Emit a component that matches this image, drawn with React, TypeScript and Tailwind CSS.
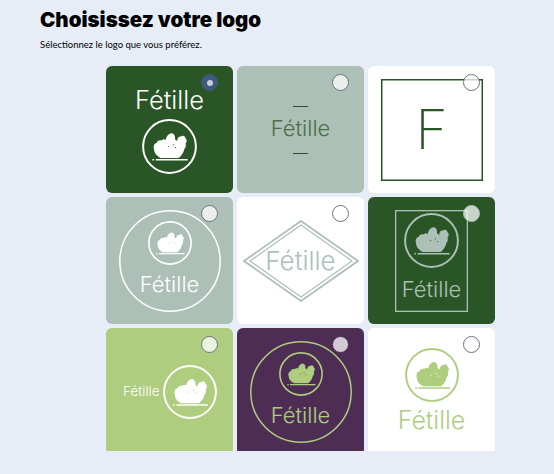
import type { ReactNode } from "react";

function Mark({ className, speck }: { className: string; speck: string }) {
  return (
    <svg viewBox="0 0 100 100" className={className} fill="none">
      <circle cx="50" cy="50" r="48" stroke="currentColor" strokeWidth="3.6" />
      <path
        fill="currentColor"
        d="M34 71C27 67 22 62 22 55C20 50 22 44 27 43C28 39 33 38 36 39C38 36 41 36 43 38C44 32 48 27 53 26C58 26 61 31 60 37L64 40C64 35 67 31 71 32C73 29 79 30 79 35C83 38 81 43 79 45C81 49 79 53 77 54C76 61 71 68 66 71Z"
      />
      <path d="M19 74H22M25 74H83" stroke="currentColor" strokeWidth="2.6" />
      <circle cx="48" cy="50" r="1.1" fill={speck} />
      <circle cx="57" cy="47" r="1.1" fill={speck} />
      <circle cx="61" cy="52" r="1.1" fill={speck} />
    </svg>
  );
}

function Ring({ color }: { color: string }) {
  return (
    <svg viewBox="0 0 102 102" className="absolute inset-0 w-full h-full" fill="none">
      <circle cx="51" cy="51" r="50.2" stroke={color} strokeWidth="1.5" />
    </svg>
  );
}

function Name({ className }: { className: string }) {
  return <span className={`font-light leading-none whitespace-nowrap ${className}`}>Fétille</span>;
}

function Card({ bg, radio, children, dot }: { bg: string; radio?: string; children: ReactNode; dot?: boolean }) {
  return (
    <div className={`relative h-[127px] rounded-md overflow-hidden ${bg}`}>
      {children}
      <span
        className={`absolute top-[8px] right-[15px] w-[17px] h-[17px] rounded-full border flex items-center justify-center ${
          radio ?? "bg-white/75 border-gray-500"
        }`}
      >
        {dot && <span className="w-[6px] h-[6px] rounded-full bg-[#c7cfdb]" />}
      </span>
    </div>
  );
}

export default function App() {
  return (
    <div className="h-[474px] overflow-hidden bg-[#e6edf6] text-black font-['Inter',sans-serif]">
      <div className="px-10 pt-[6px]">
        <h1 className="text-[20.5px] leading-[28px] font-black">Choisissez votre logo</h1>
        <p className="mt-[4px] text-[9.5px] leading-[14px] font-['Lato',sans-serif]">
          Sélectionnez le logo que vous préférez.
        </p>
      </div>

      <div className="mt-[14px] ml-[106px] w-[389px] h-[385px] overflow-hidden grid grid-cols-3 gap-x-[4px] gap-y-[4px] auto-rows-[127px]">
        <Card bg="bg-[#2a5526]" radio="bg-[#3f5a80] border-gray-600" dot>
          <div className="flex flex-col items-center pt-[21px] text-white">
            <Name className="text-[25.5px]" />
            <Mark className="w-[55px] h-[55px] mt-[6px]" speck="#2a5526" />
          </div>
        </Card>

        <Card bg="bg-[#adc0b8]">
          <div className="h-full flex flex-col items-center justify-center text-[#4b6f47]">
            <span className="w-[15px] h-px bg-[#2a5526]" />
            <Name className="text-[22px] mt-[10px] mb-[14px]" />
            <span className="w-[15px] h-px bg-[#2a5526]" />
          </div>
        </Card>

        <Card bg="bg-white">
          <div className="h-full flex items-center justify-center">
            <div className="relative w-[102px] h-[102px] flex items-center justify-center">
              <svg viewBox="0 0 102 102" className="absolute inset-0 w-full h-full" fill="none">
                <rect x="0.75" y="0.75" width="100.5" height="100.5" stroke="#2a5526" strokeWidth="1.5" />
              </svg>
              <span className="text-[55px] leading-none font-extralight text-[#2a5526]">F</span>
            </div>
          </div>
        </Card>

        <Card bg="bg-[#adc0b8]">
          <div className="h-full flex items-center justify-center">
            <div className="relative w-[102px] h-[102px] flex flex-col items-center pt-[11px] text-white">
              <Ring color="#ffffff" />
              <Mark className="w-[44px] h-[44px]" speck="#adc0b8" />
              <Name className="text-[22px] mt-[8px]" />
            </div>
          </div>
        </Card>

        <Card bg="bg-white">
          <div className="relative h-full flex items-center justify-center">
            <svg viewBox="0 0 116 82" className="absolute w-[116px] h-[82px]" fill="none" stroke="#adc0b8">
              <path d="M58 1L115 41L58 81L1 41Z" strokeWidth="1.8" />
              <path d="M58 5L109 41L58 77L7 41Z" strokeWidth="1.2" />
            </svg>
            <Name className="relative text-[26px] text-[#adc0b8]" />
          </div>
        </Card>

        <Card bg="bg-[#2a5526]" radio="bg-white/75 border-[#adc0b8]">
          <div className="h-full flex items-center justify-center">
            <div className="relative w-[73px] h-[102px] flex flex-col items-center pt-[3px] text-[#adc0b8]">
              <svg viewBox="0 0 73 102" className="absolute inset-0 w-full h-full" fill="none">
                <rect x="0.65" y="0.65" width="71.7" height="100.7" stroke="#adc0b8" strokeWidth="1.3" />
              </svg>
              <Mark className="w-[55px] h-[55px]" speck="#2a5526" />
              <Name className="text-[22px] mt-[10px]" />
            </div>
          </div>
        </Card>

        <Card bg="bg-[#aecd7f]">
          <div className="flex items-center pl-[17px] pt-[37px] text-white">
            <Name className="text-[13.5px] mr-[3px]" />
            <Mark className="w-[54px] h-[54px]" speck="#aecd7f" />
          </div>
        </Card>

        <Card bg="bg-[#4e2d55]" radio="bg-white/75 border-[#4e2d55]">
          <div className="h-full flex items-center justify-center">
            <div className="relative w-[102px] h-[102px] flex flex-col items-center pt-[11px] text-[#aecd7f]">
              <Ring color="#aecd7f" />
              <Mark className="w-[44px] h-[44px]" speck="#4e2d55" />
              <Name className="text-[22px] mt-[8px]" />
            </div>
          </div>
        </Card>

        <Card bg="bg-white">
          <div className="flex flex-col items-center pt-[20px] text-[#aecd7f]">
            <Mark className="w-[54px] h-[54px]" speck="#ffffff" />
            <Name className="text-[25px] mt-[6px]" />
          </div>
        </Card>
      </div>
    </div>
  );
}
